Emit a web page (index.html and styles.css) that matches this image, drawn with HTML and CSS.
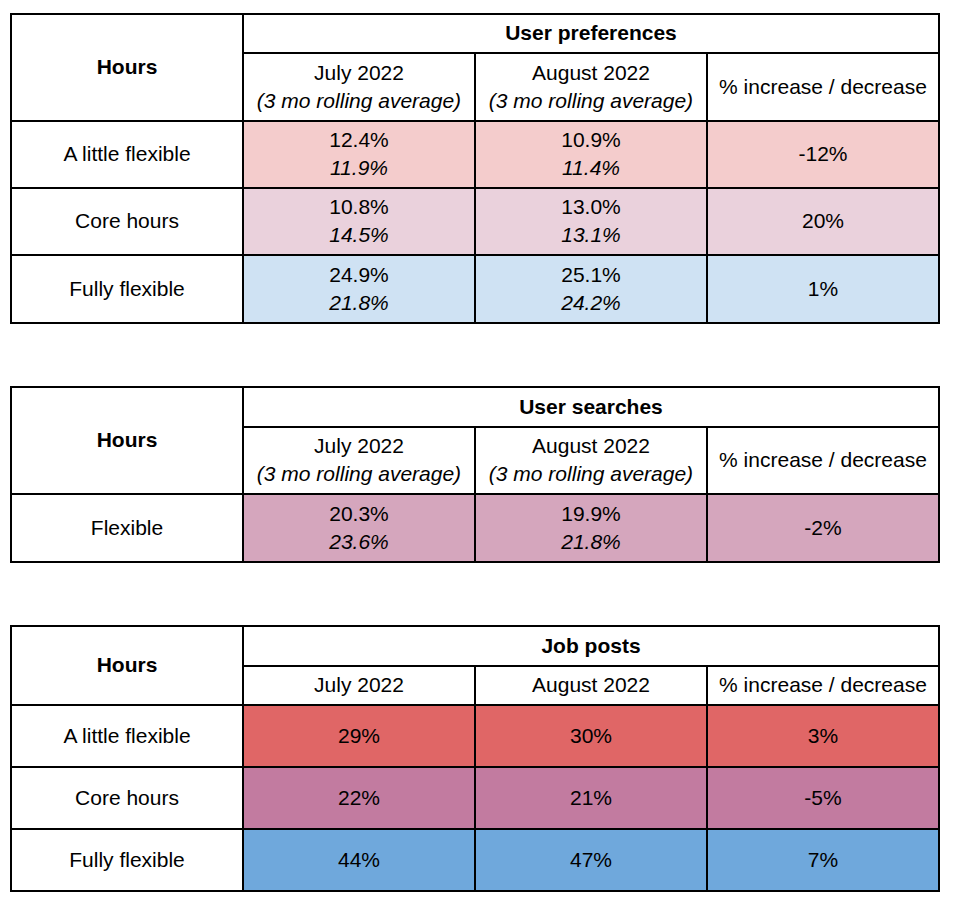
FILE: index.html
```html
<!DOCTYPE html>
<html lang="en">
<head>
<meta charset="utf-8">
<title>Hours tables</title>
<link rel="stylesheet" href="styles.css">
</head>
<body>
<table class="grid t1">
  <colgroup><col><col><col><col></colgroup>
  <tr class="h1">
    <th rowspan="2" class="hours">Hours</th>
    <th colspan="3">User preferences</th>
  </tr>
  <tr class="h2">
    <td>July 2022<br><i>(3 mo rolling average)</i></td>
    <td>August 2022<br><i>(3 mo rolling average)</i></td>
    <td>% increase / decrease</td>
  </tr>
  <tr class="r65">
    <td>A little flexible</td>
    <td class="pink">12.4%<br><i>11.9%</i></td>
    <td class="pink">10.9%<br><i>11.4%</i></td>
    <td class="pink">-12%</td>
  </tr>
  <tr class="r65">
    <td>Core hours</td>
    <td class="mauve">10.8%<br><i>14.5%</i></td>
    <td class="mauve">13.0%<br><i>13.1%</i></td>
    <td class="mauve">20%</td>
  </tr>
  <tr class="r66">
    <td>Fully flexible</td>
    <td class="sky">24.9%<br><i>21.8%</i></td>
    <td class="sky">25.1%<br><i>24.2%</i></td>
    <td class="sky">1%</td>
  </tr>
</table>

<table class="grid t2">
  <colgroup><col><col><col><col></colgroup>
  <tr class="h1b">
    <th rowspan="2" class="hours">Hours</th>
    <th colspan="3">User searches</th>
  </tr>
  <tr class="r65">
    <td>July 2022<br><i>(3 mo rolling average)</i></td>
    <td>August 2022<br><i>(3 mo rolling average)</i></td>
    <td>% increase / decrease</td>
  </tr>
  <tr class="r66">
    <td>Flexible</td>
    <td class="orchid">20.3%<br><i>23.6%</i></td>
    <td class="orchid">19.9%<br><i>21.8%</i></td>
    <td class="orchid">-2%</td>
  </tr>
</table>

<table class="grid t3">
  <colgroup><col><col><col><col></colgroup>
  <tr class="h1b">
    <th rowspan="2" class="hours">Hours</th>
    <th colspan="3">Job posts</th>
  </tr>
  <tr class="h1">
    <td>July 2022</td>
    <td>August 2022</td>
    <td>% increase / decrease</td>
  </tr>
  <tr class="r60">
    <td>A little flexible</td>
    <td class="red">29%</td>
    <td class="red">30%</td>
    <td class="red">3%</td>
  </tr>
  <tr class="r60">
    <td>Core hours</td>
    <td class="plum">22%</td>
    <td class="plum">21%</td>
    <td class="plum">-5%</td>
  </tr>
  <tr class="r60">
    <td>Fully flexible</td>
    <td class="blue">44%</td>
    <td class="blue">47%</td>
    <td class="blue">7%</td>
  </tr>
</table>
</body>
</html>
```

FILE: styles.css
```css
html, body {
  margin: 0;
  padding: 0;
  background: #ffffff;
}

body {
  padding: 13px 0 0 10px;
  font-family: "Liberation Sans", Arial, sans-serif;
  font-size: 21px;
  line-height: 28px;
  color: #000000;
}

.grid {
  width: 930px;
  table-layout: fixed;
  border-collapse: separate;
  border-spacing: 0;
  border-top: 2px solid #000;
  border-left: 2px solid #000;
  margin: 0 0 62px 0;
}

.grid:last-child {
  margin-bottom: 0;
}

.grid col {
  width: 25%;
}

.grid th,
.grid td {
  border-right: 2px solid #000;
  border-bottom: 2px solid #000;
  padding: 0 4px 1px 4px;
  text-align: center;
  vertical-align: middle;
  white-space: nowrap;
}

.grid th {
  font-weight: bold;
}

.grid i {
  font-style: italic;
}

.h1 > th, .h1 > td { height: 36px; }
.h1b > th, .h1b > td { height: 37px; }
.h2 > th, .h2 > td { height: 65px; }
.r65 > th, .r65 > td { height: 64px; }
.r66 > th, .r66 > td { height: 65px; }
.r60 > th, .r60 > td { height: 59px; }

.pink { background: #f4cccc; }
.mauve { background: #ead1dc; }
.sky { background: #cfe2f3; }
.orchid { background: #d5a6bd; }
.red { background: #e06666; }
.plum { background: #c27ba0; }
.blue { background: #6fa8dc; }
```
